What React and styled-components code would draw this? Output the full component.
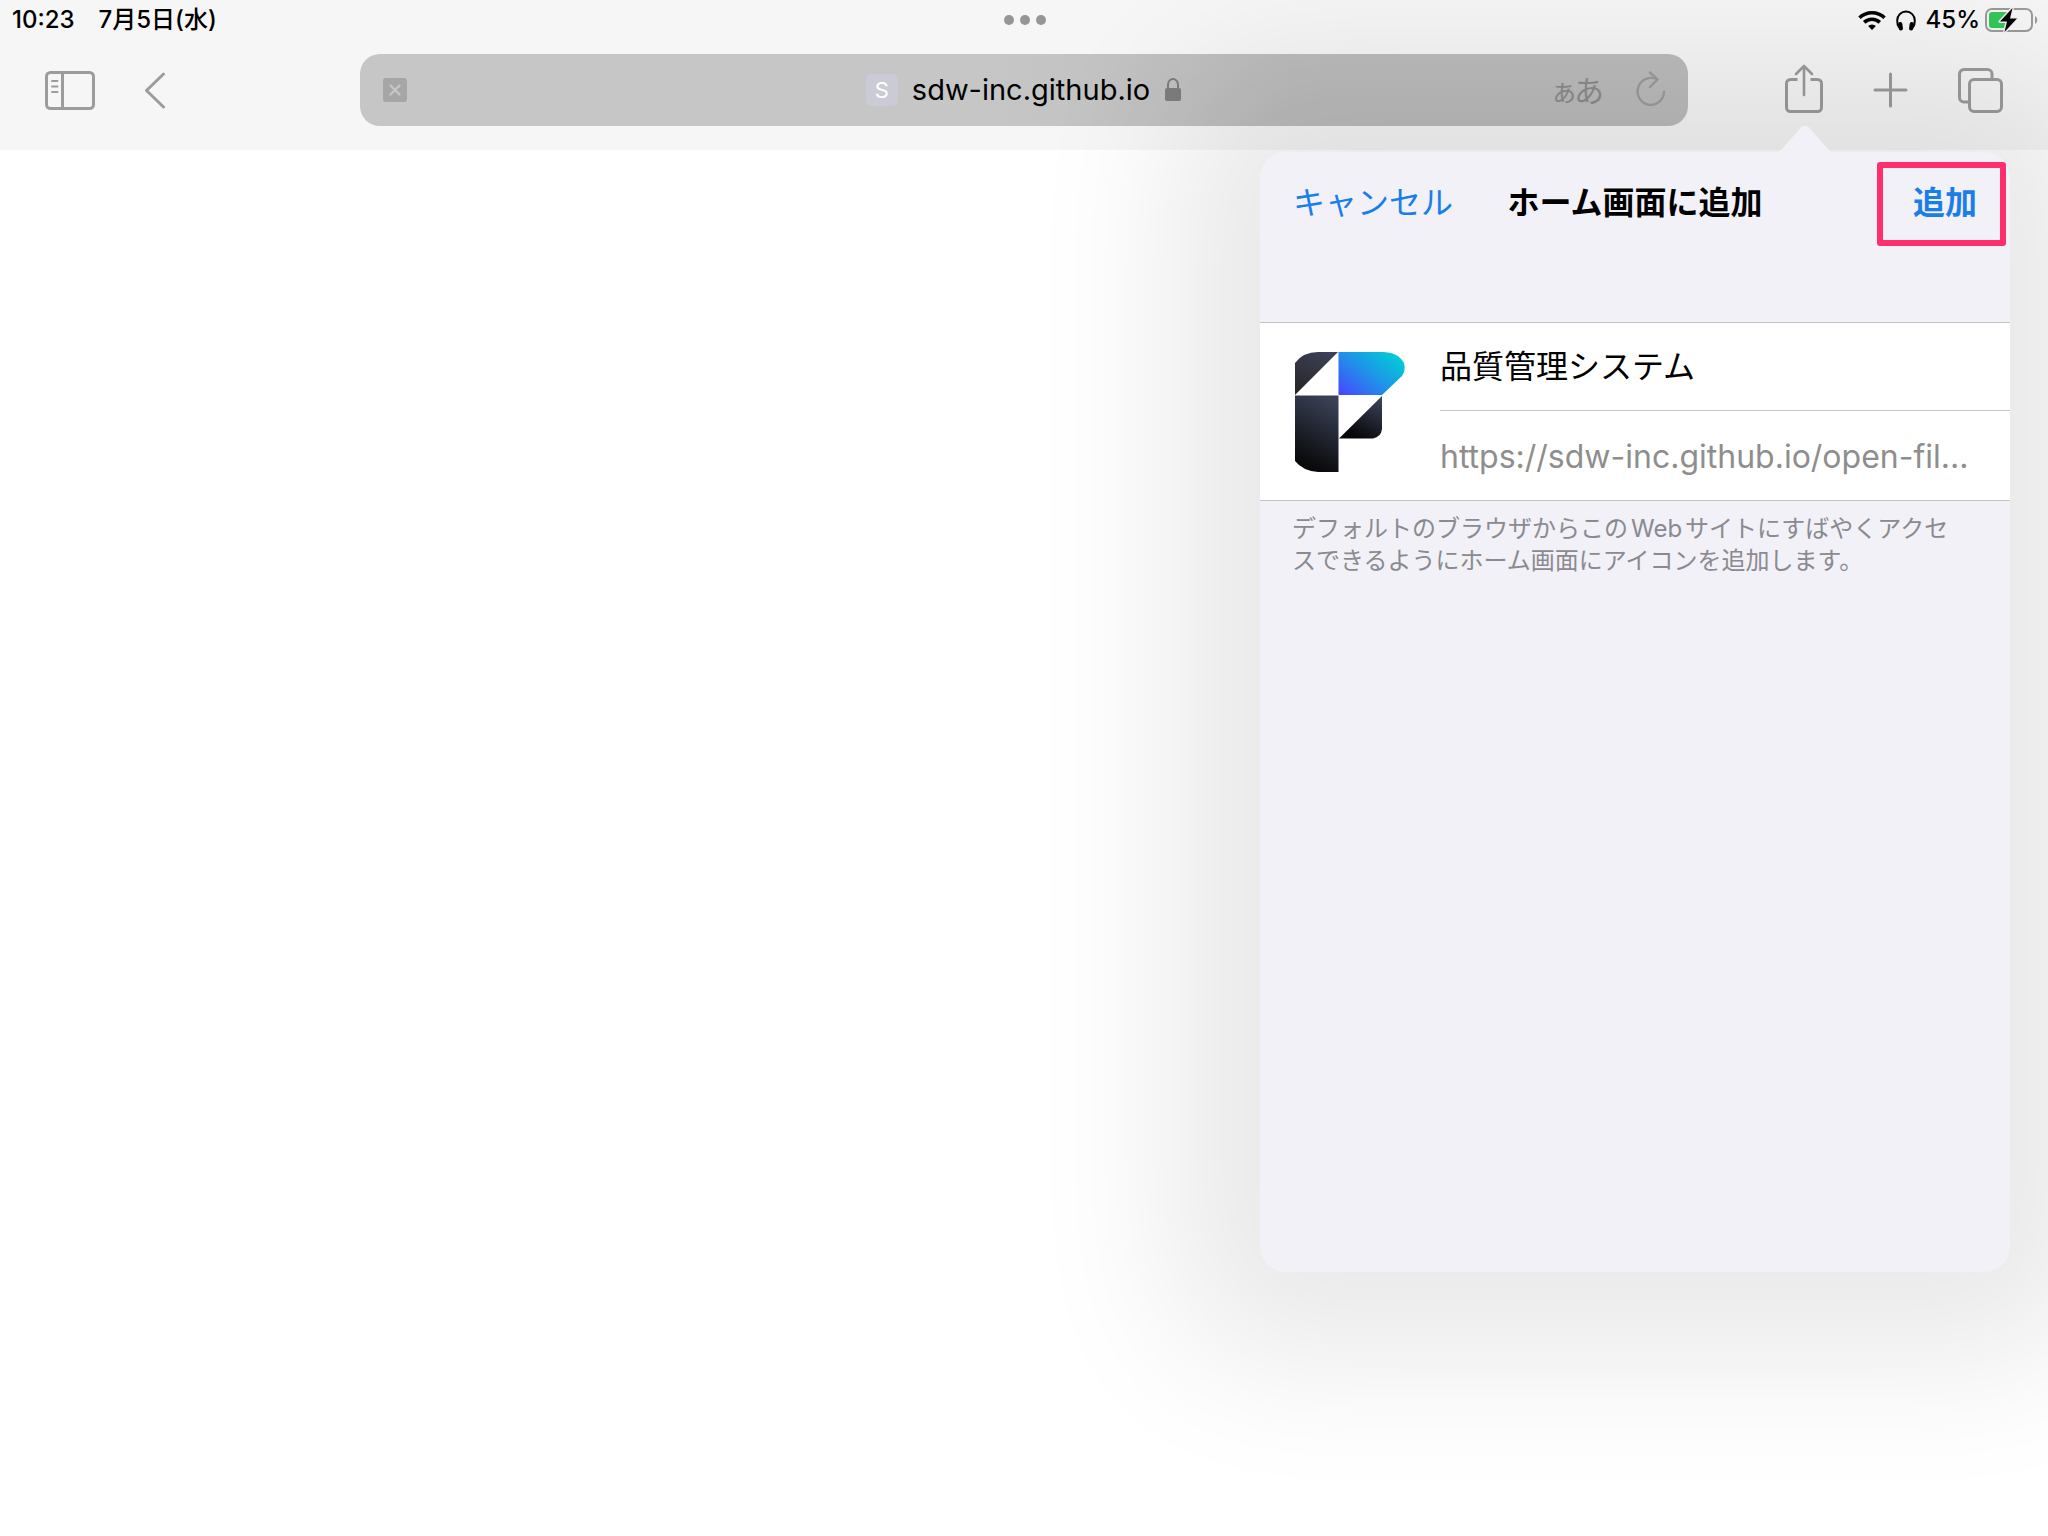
import React from "react";
import styled, { createGlobalStyle } from "styled-components";

const GlobalStyle = createGlobalStyle`
  *, *::before, *::after { box-sizing: border-box; }
  body {
    margin: 0;
    background: #fff;
    color: #000;
    font-family: Inter, "Noto Sans CJK JP", sans-serif;
    overflow: hidden;
  }
  button, input { font: inherit; color: inherit; }
`;

const Page = styled.div`
  position: relative;
  min-height: 100vh;
  overflow: hidden;
`;

const Chrome = styled.header`
  position: relative;
  background: #f6f6f6;
`;

const StatusBar = styled.div`
  display: grid;
  grid-template-columns: 1fr auto 1fr;
  align-items: center;
  height: 40px;
  padding: 0 10px 0 12px;
  font-size: 24px;
  font-weight: 500;
  line-height: 24px;
`;

const Clock = styled.div`
  display: flex;
  gap: 24px;
`;

const Dots = styled.div`
  display: flex;
  gap: 6px;
`;

const Dot = styled.span`
  width: 10px;
  height: 10px;
  border-radius: 50%;
  background: #969696;
`;

const Indicators = styled.div`
  display: flex;
  align-items: center;
  justify-content: flex-end;
  gap: 10px;
`;

const BatteryLevel = styled.div`
  display: flex;
  align-items: center;
  gap: 4px;
`;

const Toolbar = styled.div`
  display: grid;
  grid-template-columns: 360px minmax(0, 1fr) 360px;
  align-items: center;
  height: 110px;
  padding-bottom: 10px;
`;

const ToolGroup = styled.div`
  display: flex;
  align-items: center;
  justify-content: ${(p) => (p.$end ? "flex-end" : "flex-start")};
  gap: 50px;
  padding: 0 45px;
`;

const IconButton = styled.button`
  display: flex;
  padding: 0;
  border: 0;
  background: none;
  color: #9c9c9c;
`;

const AddressBar = styled.div`
  display: grid;
  grid-template-columns: 1fr auto 1fr;
  align-items: center;
  height: 72px;
  padding: 0 22px;
  border-radius: 20px;
  background: linear-gradient(90deg, #c6c6c6 48%, #bcbcbc 70%);
`;

const Site = styled.div`
  display: flex;
  align-items: center;
  gap: 14px;
  font-size: 29px;
  line-height: 36px;
`;

const Favicon = styled.span`
  width: 32px;
  height: 32px;
  border-radius: 6px;
  background: #cbcbd6;
  color: #fff;
  font-size: 22px;
  line-height: 32px;
  text-align: center;
`;

const AddressTools = styled.div`
  display: flex;
  align-items: center;
  justify-content: flex-end;
  gap: 32px;
`;

const TextButton = styled.button`
  padding: 2px 0 0;
  border: 0;
  background: none;
  color: #8c8c8c;
  font-size: 30px;
  line-height: 36px;
`;

const SmallKana = styled.span`
  margin-right: -4px;
  font-size: 28px;
`;

const Popover = styled.section`
  position: absolute;
  top: 152px;
  right: 38px;
  width: 750px;
  height: 1120px;
  border-radius: 26px;
  background: #f2f1f8;
  box-shadow: 0 0 150px 86px rgba(0, 0, 0, 0.092);
`;

const Arrow = styled.svg`
  position: absolute;
  top: -27px;
  right: 175px;
  display: block;
`;

const PopoverHeader = styled.header`
  display: grid;
  grid-template-columns: 1fr auto 1fr;
  align-items: center;
  height: 102px;
  margin-bottom: 68px;
  padding: 0 33px;
  font-size: 32px;
  line-height: 40px;
`;

const Title = styled.h1`
  margin: 0;
  font-size: 32px;
  font-weight: 700;
`;

const ActionButton = styled.button`
  position: relative;
  justify-self: ${(p) => (p.$primary ? "end" : "start")};
  padding: 0;
  border: 0;
  background: none;
  color: #1a7ee8;
  font-weight: ${(p) => (p.$primary ? 700 : 400)};
`;

const Highlight = styled.span`
  position: absolute;
  inset: -21px -29px -23px -36px;
  border: 6px solid #ff2f6d;
  border-radius: 3px;
`;

const Card = styled.div`
  display: flex;
  border: solid #c4c4c8;
  border-width: 1px 0;
  background: #fff;
`;

const AppIcon = styled.svg`
  flex: none;
  margin: 29px 35px 0;
`;

const Fields = styled.div`
  flex: 1;
  min-width: 0;
`;

const NameInput = styled.input`
  display: block;
  width: 100%;
  height: 88px;
  padding: 0 0 6px;
  border: 0;
  border-bottom: 1px solid #c4c4c8;
  outline: 0;
  background: none;
  font-size: 32px;
`;

const Address = styled.div`
  height: 89px;
  padding-right: 36px;
  color: #8e8e8e;
  font-size: 32px;
  line-height: 92px;
  white-space: nowrap;
`;

const Note = styled.p`
  margin: 12px 48px 0 32px;
  color: #8a8a8f;
  font-size: 24px;
  line-height: 32px;
  text-autospace: normal;
`;

const stroke = {
  fill: "none",
  stroke: "currentColor",
  strokeWidth: 3,
  strokeLinecap: "round",
  strokeLinejoin: "round",
};

const SidebarIcon = () => (
  <svg width="50" height="39" viewBox="0 0 50 39" {...stroke}>
    <rect x="1.5" y="1.5" width="47" height="36" rx="4" />
    <path d="M17.5 2v35" />
    <path d="M7 10h5.500M7 15.500h5.500M7 21h5.500" strokeWidth="2" />
  </svg>
);

const BackIcon = () => (
  <svg width="21" height="37" viewBox="0 0 21 37" {...stroke}>
    <path d="M18.500 2L1.500 18.500L18.500 35" />
  </svg>
);

const CloseIcon = () => (
  <svg width="26" height="26" viewBox="0 0 26 26">
    <rect x="1" y="1" width="24" height="24" rx="3" fill="#a6a6a6" />
    <path d="M8.500 8.500l9 9M17.500 8.500l-9 9" stroke="#c6c6c6" strokeWidth="2.400" strokeLinecap="round" />
  </svg>
);

const LockIcon = () => (
  <svg width="18" height="26" viewBox="0 0 18 26">
    <path d="M4 12V7.500a5 5.500 0 0 1 10 0V12" fill="none" stroke="#7d7d7d" strokeWidth="2" />
    <rect x="1" y="11" width="16" height="13" rx="2" fill="#7d7d7d" />
  </svg>
);

const ReloadIcon = () => (
  <svg width="30" height="38" viewBox="0 0 30 38" {...stroke} strokeWidth="2.400">
    <path d="M21 8.500A13.200 13.500 0 1 0 28 21" />
    <path d="M14 1.500L21.500 8.500L14 16" />
  </svg>
);

const ShareIcon = () => (
  <svg width="38" height="52" viewBox="0 0 38 52" {...stroke}>
    <path d="M12.500 15.500H5.500a4 4 0 0 0-4 4v24a4 4 0 0 0 4 4h27a4 4 0 0 0 4-4v-24a4 4 0 0 0-4-4h-7" strokeLinecap="butt" />
    <path d="M19 31V2M11 10l8-8l8 8" strokeWidth="2.600" />
  </svg>
);

const PlusIcon = () => (
  <svg width="35" height="36" viewBox="0 0 35 36" {...stroke}>
    <path d="M17.500 2v32M2 18h31" />
  </svg>
);

const TabsIcon = () => (
  <svg width="45" height="45" viewBox="0 0 45 45" {...stroke}>
    <rect x="11.500" y="11.500" width="32" height="32" rx="4.500" />
    <path d="M11 34H6a4.500 4.500 0 0 1-4.500-4.500V6A4.500 4.500 0 0 1 6 1.500h23.500A4.500 4.500 0 0 1 34 6v5" strokeLinecap="butt" />
  </svg>
);

const WifiIcon = () => (
  <svg width="28" height="20" viewBox="0 0 28 20" fill="none" stroke="#000" strokeWidth="3.600">
    <path d="M1.500 7.800a18 18 0 0 1 25 0" />
    <path d="M6.200 12.400a11.400 11.400 0 0 1 15.600 0" />
    <path d="M14 20l-3.900-3.900a5.800 5.800 0 0 1 7.800 0z" fill="#000" stroke="none" />
  </svg>
);

const HeadphonesIcon = () => (
  <svg width="20" height="21" viewBox="0 0 20 21">
    <path d="M3 17.500C1.600 15.500 1.200 13 1.200 10.500a8.800 9 0 0 1 17.600 0c0 2.500-.4 5-1.800 7" fill="none" stroke="#000" strokeWidth="2" />
    <rect x="2.400" y="12" width="4.200" height="8.500" rx="2" transform="rotate(-8 4.500 16)" />
    <rect x="13.400" y="12" width="4.200" height="8.500" rx="2" transform="rotate(8 15.500 16)" />
  </svg>
);

const BatteryIcon = () => (
  <svg width="54" height="26" viewBox="0 0 54 26">
    <rect x="2" y="2" width="46" height="22" rx="6" fill="none" stroke="#9b9b9b" strokeWidth="2" />
    <path d="M51 9c3 1.500 3 6.500 0 8z" fill="#9b9b9b" />
    <path d="M8 5h16v16H8a3 3 0 0 1-3-3V8a3 3 0 0 1 3-3z" fill="#34c759" />
    <path d="M28.500 1L16 14.500h7L20.500 25L33 11.500h-7z" fill="#000" stroke="#f0f0f0" strokeWidth="3" paintOrder="stroke" strokeLinejoin="round" />
  </svg>
);

const AppLogo = () => (
  <AppIcon width="110" height="120" viewBox="0 0 110 120" role="img" aria-label="P">
    <defs>
      <linearGradient id="blue" x1="0" y1="1" x2="1" y2="0.200">
        <stop offset="0" stopColor="#4a43ff" />
        <stop offset="0.500" stopColor="#2090ea" />
        <stop offset="1" stopColor="#00cdd6" />
      </linearGradient>
      <linearGradient id="corner" x1="0.700" y1="0" x2="0.200" y2="1">
        <stop offset="0" stopColor="#3c4056" />
        <stop offset="1" stopColor="#262628" />
      </linearGradient>
      <linearGradient id="stem" x1="0.700" y1="0" x2="0.400" y2="1">
        <stop offset="0" stopColor="#3b4258" />
        <stop offset="0.850" stopColor="#0e0f12" />
        <stop offset="1" stopColor="#08080a" />
      </linearGradient>
      <linearGradient id="fold" x1="1" y1="0.100" x2="0.500" y2="1">
        <stop offset="0" stopColor="#3b4258" />
        <stop offset="1" stopColor="#08080a" />
      </linearGradient>
    </defs>
    <path d="M43 0L0 43V11Q8 0 23 0z" fill="url(#corner)" />
    <path d="M43.500 0H87Q103 0 109 11Q111 19 107 24L87 43H43.500z" fill="url(#blue)" />
    <path d="M0 43.500H43.500V120H23Q8 119 0 109z" fill="url(#stem)" />
    <path d="M87 44V77Q86 85 78 86.500H44z" fill="url(#fold)" />
  </AppIcon>
);

export default function App() {
  return (
    <Page>
      <GlobalStyle />
      <Chrome>
        <StatusBar>
          <Clock>
            <span>10:23</span>
            <span>7月5日(水)</span>
          </Clock>
          <Dots>
            <Dot />
            <Dot />
            <Dot />
          </Dots>
          <Indicators>
            <WifiIcon />
            <HeadphonesIcon />
            <BatteryLevel>
              <span>45%</span>
              <BatteryIcon />
            </BatteryLevel>
          </Indicators>
        </StatusBar>
        <Toolbar>
          <ToolGroup>
            <IconButton aria-label="サイドバー"><SidebarIcon /></IconButton>
            <IconButton aria-label="戻る"><BackIcon /></IconButton>
          </ToolGroup>
          <AddressBar>
            <IconButton aria-label="閉じる"><CloseIcon /></IconButton>
            <Site>
              <Favicon>S</Favicon>
              <span>sdw-inc.github.io</span>
              <LockIcon />
            </Site>
            <AddressTools>
              <TextButton><SmallKana>ぁ</SmallKana>あ</TextButton>
              <IconButton aria-label="再読み込み"><ReloadIcon /></IconButton>
            </AddressTools>
          </AddressBar>
          <ToolGroup $end>
            <IconButton aria-label="共有"><ShareIcon /></IconButton>
            <IconButton aria-label="新規タブ"><PlusIcon /></IconButton>
            <IconButton aria-label="タブ一覧"><TabsIcon /></IconButton>
          </ToolGroup>
        </Toolbar>
      </Chrome>
      <Popover>
        <Arrow width="60" height="28" viewBox="0 0 60 28">
          <path d="M0 28Q4 27 7 24L26 2.500Q30-1.500 34 2.500L53 24Q56 27 60 28z" fill="#f2f1f8" />
        </Arrow>
        <PopoverHeader>
          <ActionButton>キャンセル</ActionButton>
          <Title>ホーム画面に追加</Title>
          <ActionButton $primary>
            追加
            <Highlight />
          </ActionButton>
        </PopoverHeader>
        <Card>
          <AppLogo />
          <Fields>
            <NameInput aria-label="名前" defaultValue="品質管理システム" />
            <Address>https://sdw-inc.github.io/open-fil...</Address>
          </Fields>
        </Card>
        <Note>
          デフォルトのブラウザからこのWebサイトにすばやくアクセスできるようにホーム画面にアイコンを追加します。
        </Note>
      </Popover>
    </Page>
  );
}
